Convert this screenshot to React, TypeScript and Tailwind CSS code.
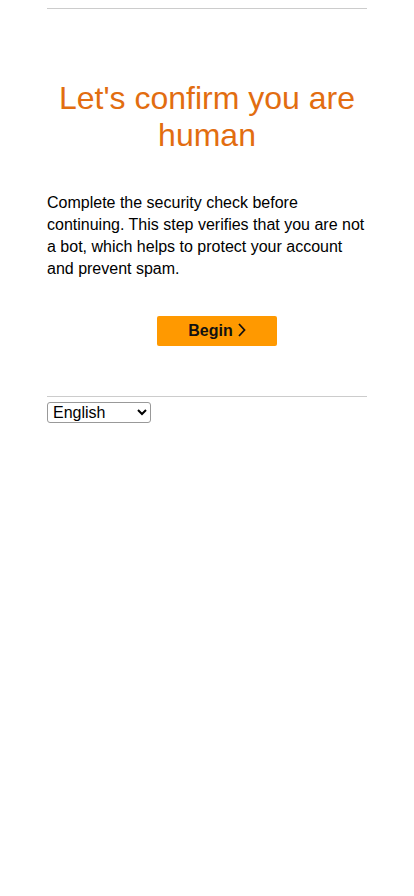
export default function App() {
  return (
    <div className="min-h-[896px] bg-white font-['Liberation_Sans',Arial,sans-serif] text-black">
      <div className="mx-auto w-[320px] pt-2">
        <div className="border-t border-[#cccccc]" />
        <h1 className="mt-[71px] text-center text-[32px] font-normal leading-[37px] text-[#e26d10]">
          Let's confirm you are human
        </h1>
        <p className="mt-[38px] text-[16px] leading-[22px]">
          Complete the security check before continuing. This step verifies that you are not a bot, which helps to protect your account and prevent spam.
        </p>
        <div className="mt-[36px] flex justify-center pl-[20px]">
          <button className="flex h-[30px] w-[120px] items-center justify-center gap-[4px] rounded-[2px] bg-[#ff9900] text-[16px] font-bold text-[#111]">
            Begin
            <svg width="9" height="16" viewBox="0 0 9 16" fill="none" className="mb-[2px]">
              <path d="M2 2l5.5 6L2 14" stroke="#111" strokeWidth="1.8" />
            </svg>
          </button>
        </div>
        <div className="mt-[50px] border-t border-[#cccccc]" />
        <select className="mt-[5px] h-[21px] w-[104px] rounded-[3px] border border-[#999] bg-white px-[1px] text-[16px] leading-[19px]">
          <option>English</option>
        </select>
      </div>
    </div>
  );
}
